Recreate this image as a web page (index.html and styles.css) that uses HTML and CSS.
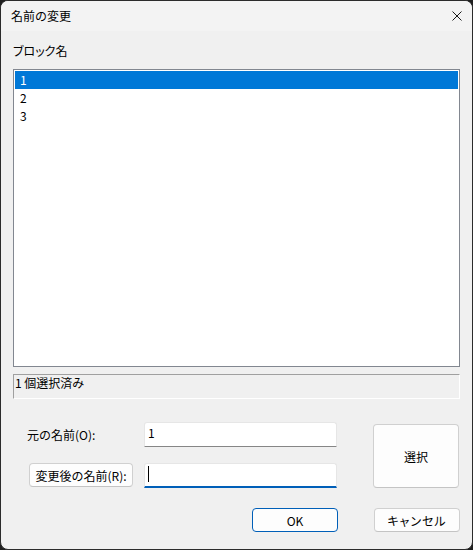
FILE: index.html
```html
<!DOCTYPE html>
<html lang="ja">

<head>
    <meta charset="UTF-8">
    <meta name="viewport" content="width=device-width, initial-scale=1.0">
    <title>名前の変更</title>
    <link rel="stylesheet" href="styles.css">
</head>

<body>
    <div class="window">
        <!-- Title bar -->
        <div class="titlebar">
            <span class="title">名前の変更</span>
            <button class="close" type="button" aria-label="閉じる">
                <svg width="10" height="10" viewBox="0 0 10 10">
                    <path d="M0.5 0.5 L9.5 9.5 M9.5 0.5 L0.5 9.5" stroke="#1a1a1a" stroke-width="1" fill="none" />
                </svg>
            </button>
        </div>

        <div class="content">
            <div class="group-label"><span class="kana">ブロック</span>名</div>

            <!-- Block list -->
            <ul class="listbox">
                <li class="item selected">1</li>
                <li class="item">2</li>
                <li class="item">3</li>
            </ul>

            <div class="status">1 個選択済み</div>

            <!-- Rename form -->
            <div class="rename-grid">
                <label class="field-label" for="oldName">元の名前(O):</label>
                <div class="textbox" id="oldName">1</div>
                <button class="btn btn-pick" type="button">選択</button>

                <button class="btn btn-label" type="button">変更後の名前(R):</button>
                <div class="textbox focused"><span class="caret"></span></div>
            </div>

            <div class="actions">
                <button class="btn btn-default" type="button">OK</button>
                <button class="btn" type="button"><span class="kana wide">キャンセル</span></button>
            </div>
        </div>
    </div>
</body>

</html>
```

FILE: styles.css
```css
* {
    margin: 0;
    padding: 0;
    box-sizing: border-box;
}

body {
    background-color: #1f1f1f;
    font-family: "Noto Sans CJK JP", "Noto Sans", sans-serif;
    font-size: 12px;
    color: #000000;
}

/* katakana runs are set proportionally */
.kana {
    font-feature-settings: "palt";
}

.kana.wide {
    letter-spacing: 1px;
}

.window {
    width: 473px;
    height: 550px;
    border: 1px solid #2b2b2b;
    border-radius: 8px;
    background-color: #f0f0f0;
    overflow: hidden;
    display: flex;
    flex-direction: column;
}

.titlebar {
    height: 30px;
    background-color: #f3f3f3;
    display: flex;
    align-items: center;
    justify-content: space-between;
    padding-left: 10px;
    padding-right: 10px;
}

.title {
    line-height: 16px;
}

.close {
    border: none;
    background: none;
    width: 10px;
    height: 10px;
    display: flex;
}

.content {
    padding: 12px 12px 0 12px;
    display: flex;
    flex-direction: column;
}

.group-label {
    line-height: 16px;
    margin-bottom: 10px;
}

.listbox {
    list-style: none;
    height: 298px;
    background-color: #ffffff;
    border: 1px solid #828790;
    padding: 1px;
}

.item {
    height: 18px;
    line-height: 18px;
    padding-left: 5px;
}

.item.selected {
    background-color: #0078d7;
    color: #ffffff;
}

.status {
    margin-top: 7px;
    height: 25px;
    border-top: 1px solid #a0a0a0;
    border-left: 1px solid #a0a0a0;
    border-right: 1px solid #ffffff;
    border-bottom: 1px solid #ffffff;
    padding-left: 1px;
    line-height: 16px;
}

.rename-grid {
    margin-top: 23px;
    margin-left: 14px;
    display: grid;
    grid-template-columns: 117px 193px 36px 86px;
    grid-template-rows: 25px 25px;
    row-gap: 16px;
}

.field-label {
    align-self: center;
    line-height: 16px;
}

.textbox {
    background-color: #ffffff;
    border: 1px solid #e6e6e6;
    border-bottom: 1px solid #868686;
    border-radius: 3px 3px 0 0;
    padding: 2px 0 0 3px;
    line-height: 16px;
}

.textbox.focused {
    border-bottom: 2px solid #005fb8;
    padding-top: 2px;
}

.caret {
    display: block;
    width: 1px;
    height: 16px;
    background-color: #000000;
}

.btn {
    font-family: inherit;
    font-size: 12px;
    color: #000000;
    background-color: #fdfdfd;
    border: 1px solid #d0d0d0;
    border-bottom-color: #c4c4c4;
    border-radius: 4px;
}

.btn-pick {
    grid-column: 4;
    grid-row: 1 / span 2;
    margin-top: 2px;
}

.btn-label {
    grid-column: 1;
    grid-row: 2;
    width: 104px;
    height: 24px;
    margin-left: 2px;
}

.rename-grid .textbox.focused {
    grid-column: 2;
    grid-row: 2;
}

.actions {
    margin-top: 20px;
    display: flex;
    justify-content: flex-end;
    gap: 36px;
}

.actions .btn {
    width: 86px;
    height: 24px;
}

.btn-default {
    border: 1px solid #005fb8;
}
```
